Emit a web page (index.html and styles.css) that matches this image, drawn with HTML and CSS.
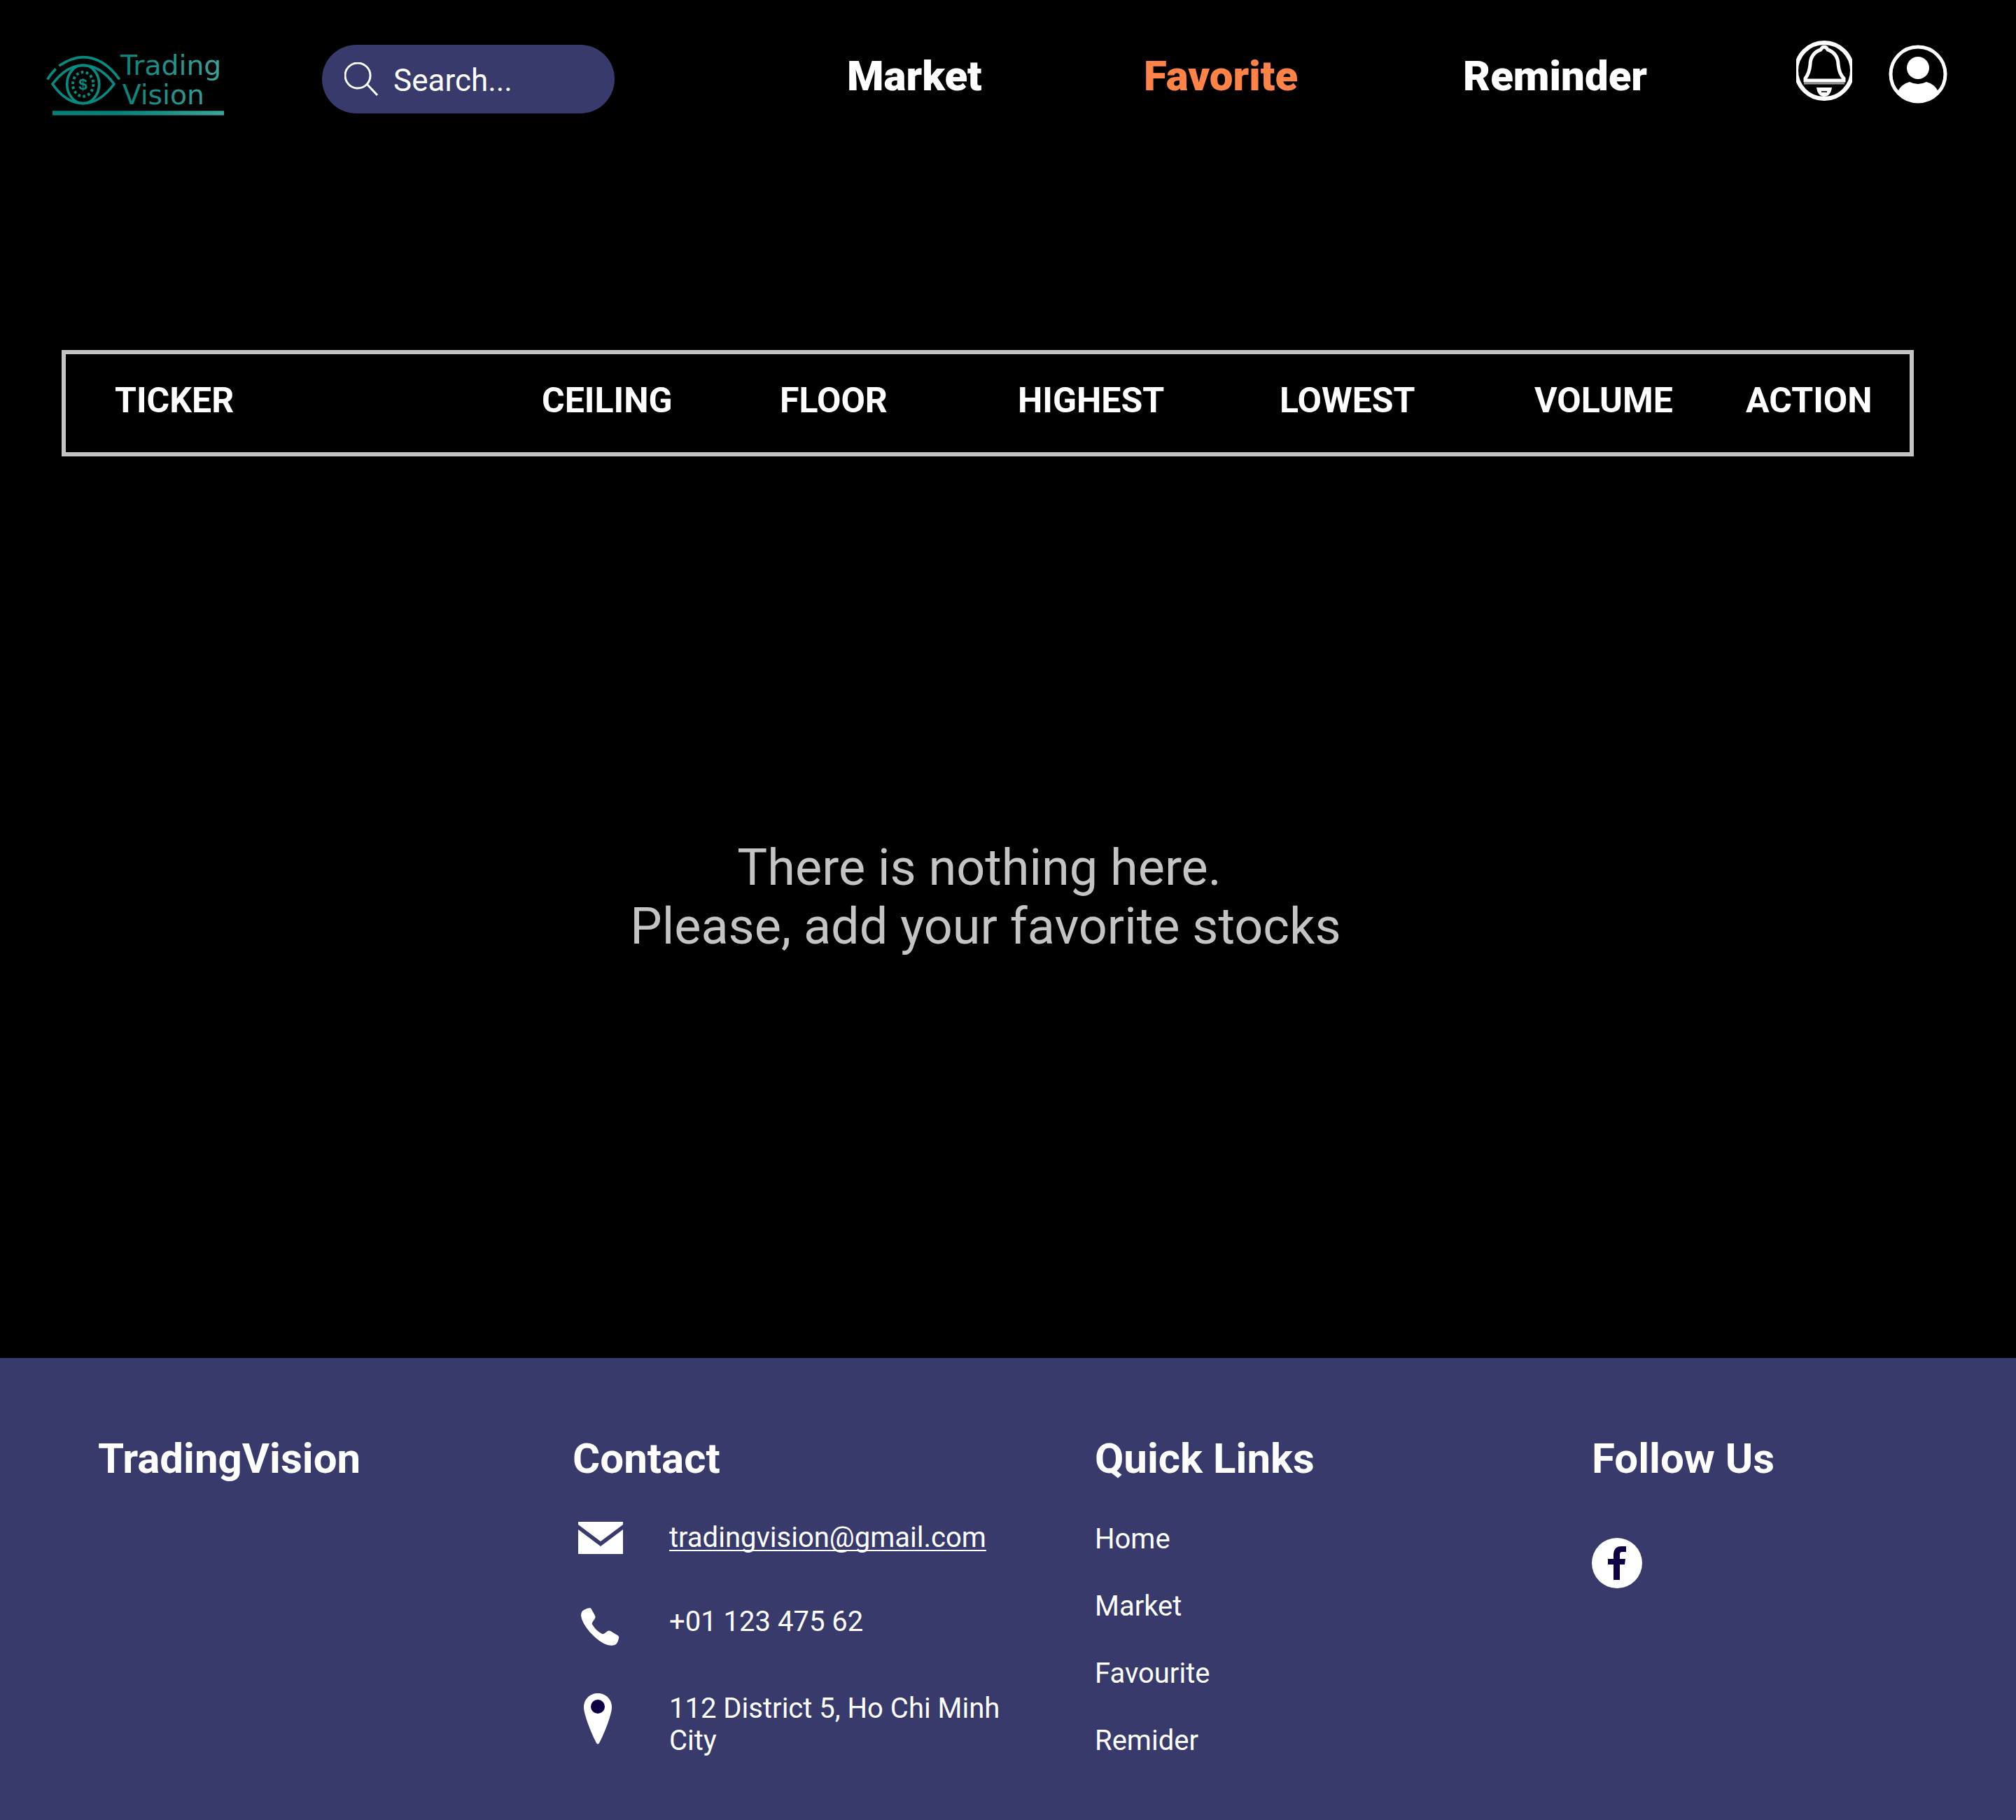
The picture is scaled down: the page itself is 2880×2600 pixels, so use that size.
FILE: index.html
```html
<!DOCTYPE html>
<html lang="en">
<head>
<meta charset="utf-8">
<meta name="viewport" content="width=device-width, initial-scale=1">
<title>Trading Vision - Favorite</title>
<link rel="stylesheet" href="styles.css">
</head>
<body>
<header class="header">
  <a class="logo" href="#" aria-label="Trading Vision">
    <svg class="logo-art" viewBox="72 48 780 300">
      <defs>
        <linearGradient id="teal" gradientUnits="userSpaceOnUse" x1="380" y1="0" x2="840" y2="0">
          <stop offset="0" stop-color="#078078"/>
          <stop offset="1" stop-color="#3fa398"/>
        </linearGradient>
      </defs>
      <g fill="none" stroke="#078a80" stroke-width="11">
        <path d="M133 132Q190 95 236 95C300 95 350 132 392 190"/>
        <path d="M83 191Q98 166 119 145"/>
        <path d="M105 210Q165 130 236 130Q310 130 369 210Q308 293 236 293Q162 293 105 210Z"/>
        <ellipse cx="236" cy="211" rx="69" ry="82"/>
        <ellipse cx="236" cy="211" rx="44" ry="52" stroke-width="12" stroke-dasharray="11 10.6"/>
      </g>
      <text class="logo-coin" x="236" y="234" text-anchor="middle">$</text>
      <text class="logo-text" x="396" y="170" fill="url(#teal)">Trading</text>
      <text class="logo-text" x="404" y="297" fill="url(#teal)">Vision</text>
      <rect x="105" y="325" width="735" height="19" fill="url(#teal)"/>
    </svg>
  </a>
  <label class="search">
    <svg class="search-icon" viewBox="0 0 48 48" fill="none" stroke="#fff" stroke-width="3">
      <circle cx="19" cy="19" r="18"/>
      <path d="M32 31L47 47"/>
    </svg>
    <input class="search-input" type="text" placeholder="Search..." aria-label="Search">
  </label>
  <nav class="nav">
    <a href="#">Market</a>
    <a class="active" href="#">Favorite</a>
    <a href="#">Reminder</a>
  </nav>
  <div class="actions">
    <button class="icon-button" type="button" aria-label="Notifications">
      <svg class="bell" viewBox="0 0 80 90" fill="none" stroke="#fff" stroke-width="5">
        <circle cx="40" cy="43" r="40" stroke-width="6"/>
        <path d="M40 9C37 9 36 11 35 13C25 16 20 25 20 34C19 44 17 49 13 54V57H68V54C63 49 61 44 60 34C60 25 55 16 45 13C44 11 43 9 40 9Z"/>
        <path d="M11 61H69" stroke="#999" stroke-width="3"/>
        <path d="M29 67H51C50 75 46 80 40 80S30 75 29 67Z" fill="#fff" stroke="none"/>
        <path d="M36 73H44" stroke="#333" stroke-width="2"/>
      </svg>
    </button>
    <button class="icon-button" type="button" aria-label="Account">
      <svg class="user" viewBox="0 0 84 84">
        <circle cx="42" cy="42" r="39" fill="none" stroke="#fff" stroke-width="5"/>
        <circle cx="42" cy="33" r="16" fill="#fff"/>
        <path d="M30 53Q42 59 54 53Q66 56 71 67Q60 82 42 82T13 67Q18 56 30 53Z" fill="#fff"/>
      </svg>
    </button>
  </div>
</header>

<main class="main">
  <table class="stocks">
    <thead>
      <tr>
        <th scope="col">TICKER</th>
        <th scope="col">CEILING</th>
        <th scope="col">FLOOR</th>
        <th scope="col">HIGHEST</th>
        <th scope="col">LOWEST</th>
        <th scope="col">VOLUME</th>
        <th scope="col">ACTION</th>
      </tr>
    </thead>
  </table>
  <p class="empty">There is nothing here.&nbsp;<br>Please, add your favorite stocks</p>
</main>

<footer class="footer">
  <section>
    <h2>TradingVision</h2>
  </section>
  <section>
    <h2>Contact</h2>
    <ul class="contact">
      <li>
        <svg class="contact-icon" viewBox="0 0 64 46" fill="#fff"><path d="M0 0H64V4L32 28L0 4Z"/><path d="M0 11L32 35L64 11V46H0Z"/></svg>
        <a class="mail" href="mailto:tradingvision@gmail.com">tradingvision@gmail.com</a>
      </li>
      <li>
        <svg class="contact-icon" viewBox="0 0 64 60" fill="#fff"><path d="M17 3Q18 3 19 5L24 14Q25 16 24 18L20 24Q19 26 21 28Q26 36 34 40Q36 41 38 39L42 36Q44 35 46 36L56 42Q59 44 58 46Q57 52 54 55Q50 58 42 56Q31 53 17 38Q5 24 4 14Q4 8 8 6Q13 3 17 3Z"/></svg>
        <span>+01 123 475 62</span>
      </li>
      <li>
        <svg class="contact-icon" viewBox="0 0 64 74"><path d="M28 1C39 1 48 9 48 21C48 32 36 61 30 72Q28 75 26 72C20 61 8 32 8 21C8 9 17 1 28 1Z" fill="#fff"/><circle cx="28" cy="20" r="10" fill="#0f0044"/></svg>
        <address>112 District 5, Ho Chi Minh City</address>
      </li>
    </ul>
  </section>
  <section>
    <h2>Quick Links</h2>
    <ul class="links">
      <li><a href="#">Home</a></li>
      <li><a href="#">Market</a></li>
      <li><a href="#">Favourite</a></li>
      <li><a href="#">Remider</a></li>
    </ul>
  </section>
  <section>
    <h2>Follow Us</h2>
    <a class="social" href="#" aria-label="Facebook">
      <svg viewBox="0 0 72 72"><circle cx="36" cy="36" r="36" fill="#fff"/><path d="M31 60V38H23V30H31V25C31 16 35 12 42 12H49V20H44C41 20 40 21 40 24V30H48L47 38H40V60Z" fill="#0f0044"/></svg>
    </a>
  </section>
</footer>
</body>
</html>
```
FILE: styles.css
```css
* {
  box-sizing: border-box;
}

body {
  display: flex;
  flex-direction: column;
  min-height: 100vh;
  margin: 0;
  background: #000;
  color: #fff;
  font-family: Roboto, "Liberation Sans", sans-serif;
  font-size: 40px;
  line-height: 46px;
}

a {
  color: inherit;
  text-decoration: none;
}

svg {
  display: block;
}

ul {
  margin: 0;
  padding: 0;
  list-style: none;
}

/* Header */

.header {
  display: grid;
  grid-template-columns: 396fr 750fr 1356fr 216px;
  align-items: start;
  padding: 58px 98px 0 64px;
}

.logo {
  padding-top: 8px;
}

.logo-art {
  width: 260px;
  height: 100px;
}

.logo-text {
  font-family: "DejaVu Sans", sans-serif;
  font-size: 118px;
}

.logo-coin {
  fill: #078a80;
  font-family: "Liberation Sans", sans-serif;
  font-size: 68px;
  font-weight: 700;
}

.search {
  display: flex;
  align-items: center;
  gap: 22px;
  width: 418px;
  height: 98px;
  margin-top: 6px;
  padding: 0 32px;
  border-radius: 49px;
  background: #373a6b;
}

.search-icon {
  flex: none;
  width: 48px;
  height: 48px;
}

.search-input {
  flex: 1;
  min-width: 0;
  padding: 4px 0 0;
  border: 0;
  outline: 0;
  background: none;
  color: #fff;
  font: 44px/52px Roboto, "Liberation Sans", sans-serif;
}

.search-input::placeholder {
  color: #fff;
  opacity: 1;
}

.nav {
  display: grid;
  grid-template-columns: 424fr 456fr 476fr;
  padding-top: 16px;
  font-size: 60px;
  font-weight: 900;
  line-height: 70px;
}

.nav .active {
  color: #ff8347;
}

.actions {
  display: flex;
  justify-content: space-between;
  align-items: flex-end;
}

.icon-button {
  padding: 0;
  border: 0;
  background: none;
}

.bell {
  width: 80px;
  height: 90px;
}

.user {
  width: 84px;
  height: 84px;
}

/* Favorites */

.main {
  display: flex;
  flex: 1;
  flex-direction: column;
  padding: 334px 146px 28px 88px;
}

.stocks {
  display: block;
  border: 6px solid #c4c4c4;
}

.stocks thead {
  display: block;
}

.stocks tr {
  display: grid;
  grid-template-columns: 610fr 340fr 340fr 374fr 364fr 302fr 234fr;
  padding: 36px 0 44px 70px;
}

.stocks th {
  padding: 0;
  font-size: 50px;
  font-weight: 700;
  line-height: 60px;
  text-align: left;
}

.empty {
  margin: auto 0;
  padding-right: 6px;
  color: #c4c4c4;
  font-size: 72px;
  line-height: 84px;
  text-align: center;
}

/* Footer */

.footer {
  display: grid;
  grid-template-columns: 678fr 746fr 710fr 508fr;
  padding: 109px 98px 90px 140px;
  background: #373a6b;
}

.footer h2 {
  margin: 0;
  font-size: 60px;
  font-weight: 700;
  line-height: 70px;
}

.contact {
  display: grid;
  gap: 64px;
  padding: 55px 100px 0 8px;
}

.contact li {
  display: flex;
  gap: 66px;
  align-items: flex-start;
  min-height: 56px;
}

.contact-icon {
  flex: none;
  width: 64px;
}

.contact address {
  font-style: normal;
}

.mail {
  text-decoration: underline 2px;
  text-decoration-skip-ink: none;
  text-underline-offset: 4px;
}

.links {
  display: grid;
  gap: 50px;
  padding-top: 57px;
}

.social {
  display: block;
  width: 72px;
  margin-top: 78px;
}
```
